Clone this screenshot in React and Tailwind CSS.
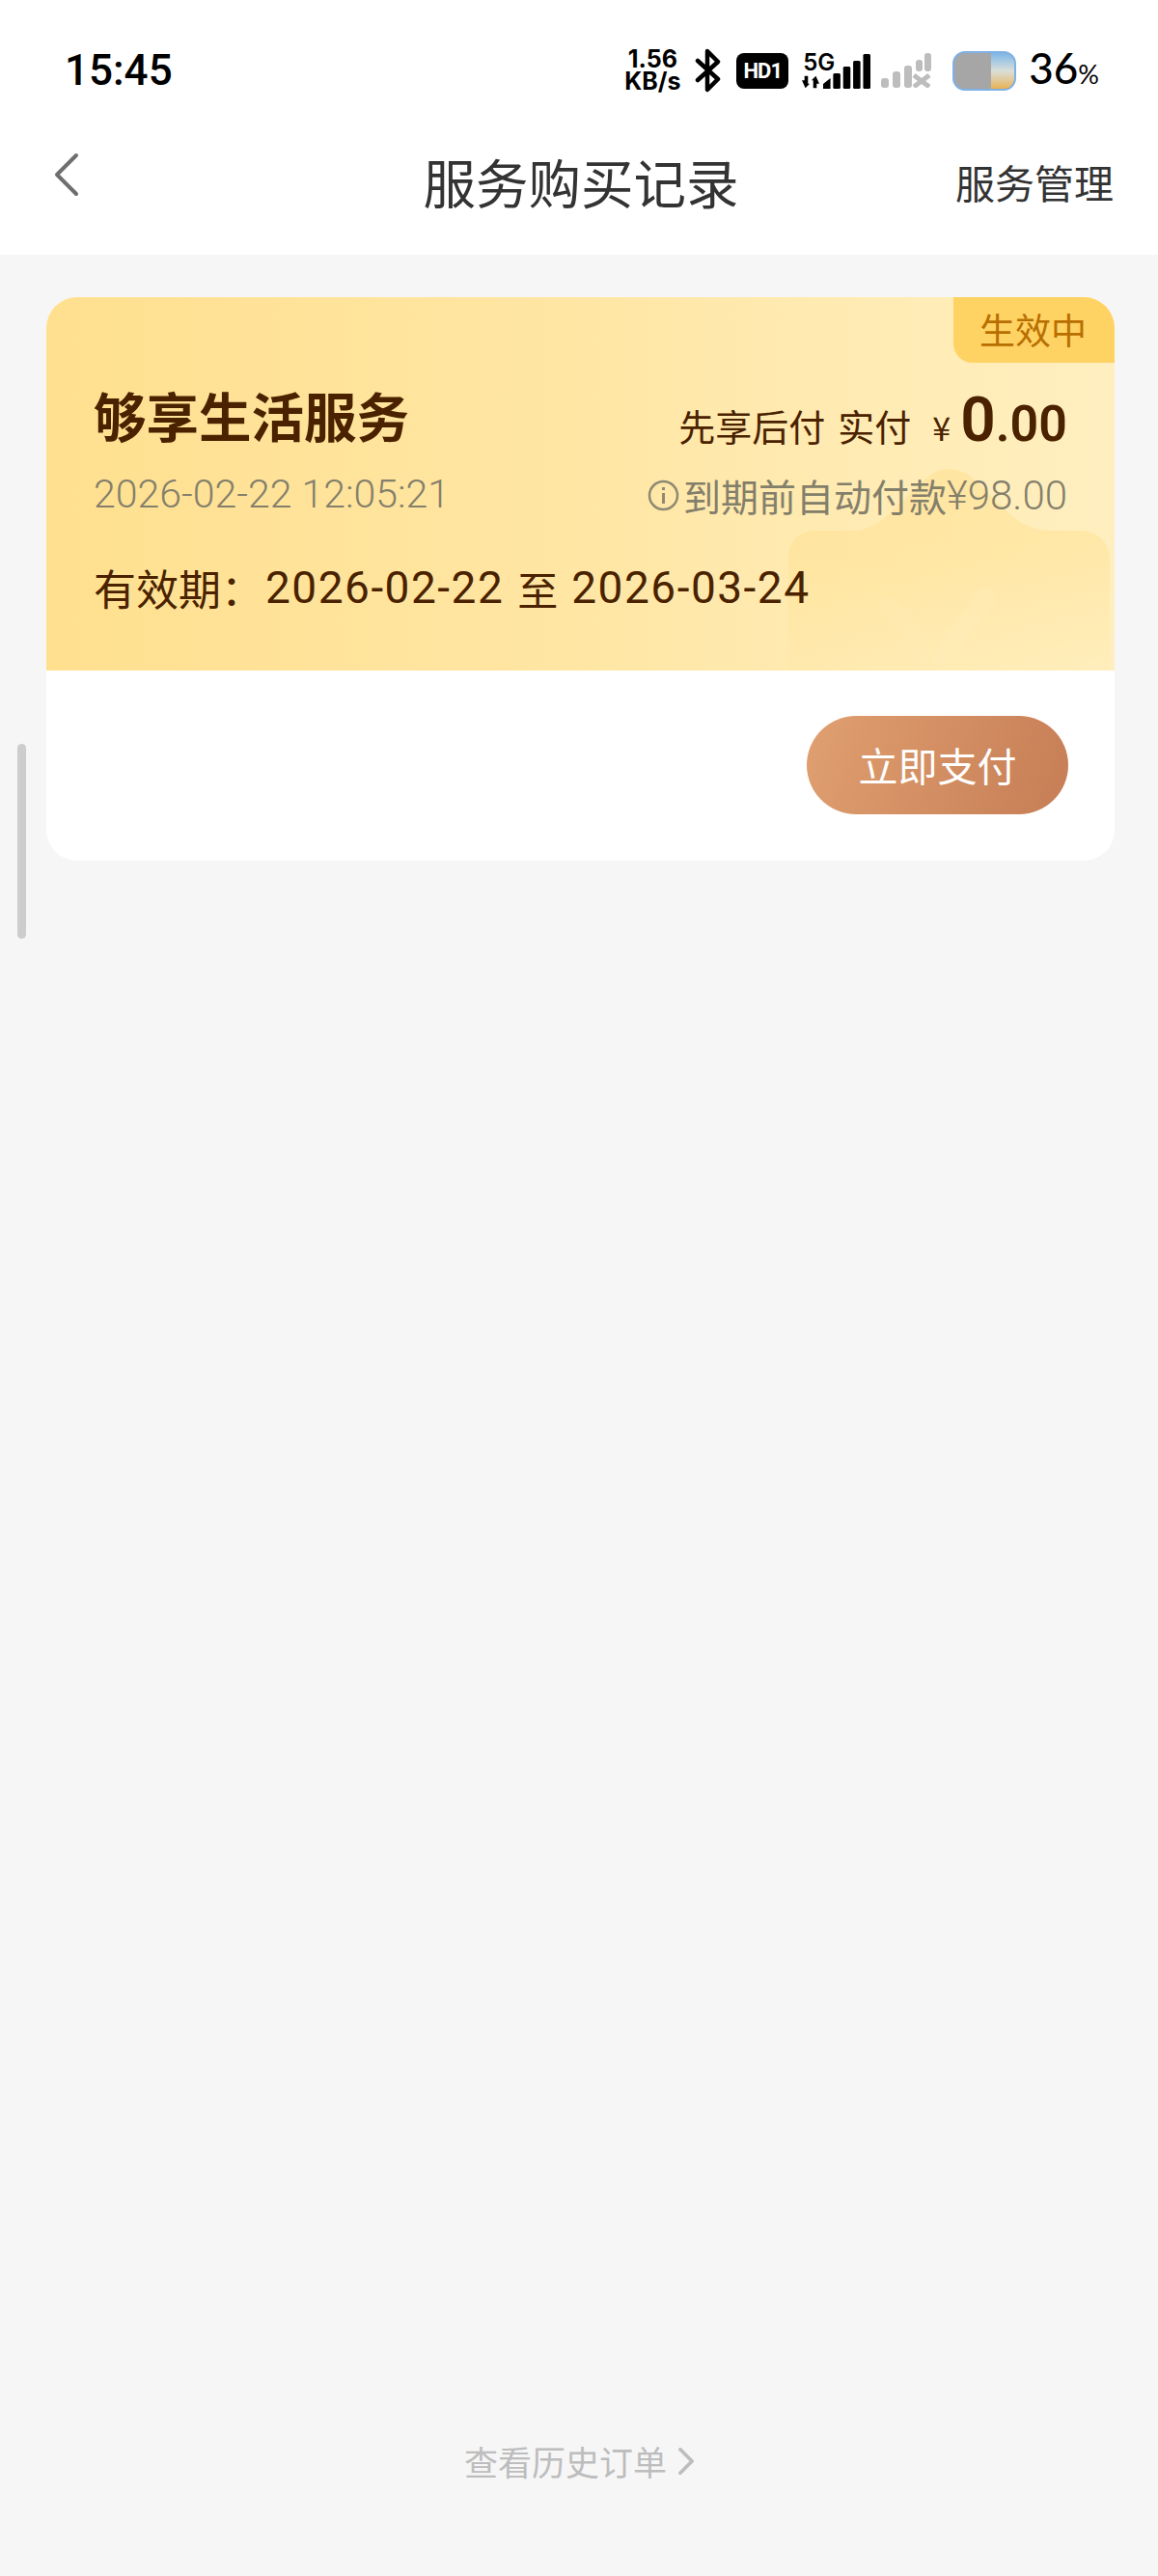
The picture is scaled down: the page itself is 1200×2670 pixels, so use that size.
import React from 'react';

const CJK = "font-['Noto_Sans_CJK_SC','Noto_Sans',sans-serif]";

// --- Status bar icons ---
const Bluetooth = () => (
    <svg width="30" height="46" viewBox="0 0 30 46" fill="none" stroke="#000" strokeWidth="4.5" strokeLinejoin="round" strokeLinecap="round">
        <path d="M4 13 L25 32 L14 43 V3 L25 14 L4 33" />
    </svg>
);

const Signal = ({ color, cross }) => (
    <svg width={cross ? 52 : 49} height="36" viewBox="0 0 52 36" preserveAspectRatio="none" fill={color}>
        {cross ? (
            <>
                <rect x="0" y="26" width="8" height="10" rx="3" />
                <rect x="12" y="19" width="8" height="17" rx="3" />
                <rect x="24" y="13" width="8" height="23" rx="3" />
                <rect x="36" y="7" width="7" height="12" rx="3" />
                <rect x="45" y="0" width="7" height="19" rx="3" />
                <path d="M34 23 L50 35 M50 23 L34 35" stroke={color} strokeWidth="5" fill="none" />
            </>
        ) : (
            <>
                <path d="M0 36 V31 L8 25 V36 Z" />
                <rect x="11" y="20" width="8" height="16" rx="1.5" />
                <rect x="22" y="13" width="8" height="23" rx="1.5" />
                <rect x="33" y="7" width="8" height="29" rx="1.5" />
                <rect x="44" y="0" width="8" height="36" rx="1.5" />
            </>
        )}
    </svg>
);

const Battery = () => (
    <div className="relative w-[66px] h-[41px] rounded-[13px] border-2 border-[#7fb0e6] bg-[#a6a6a6] overflow-hidden">
        <div className="absolute right-0 top-0 bottom-0 w-[24px] bg-gradient-to-b from-[#7db6e8] via-[#d9dfd8] to-[#e8b24f]" />
    </div>
);

// faint crown shape behind the card text
const Watermark = () => (
    <svg className="absolute right-[5px] bottom-0" width="333" height="210" viewBox="0 0 333 210" fill="none">
        <defs>
            <linearGradient id="crown" x1="0" y1="0" x2="0" y2="1">
                <stop offset="0" stopColor="#ffe08f" stopOpacity="0.55" />
                <stop offset="0.45" stopColor="#ffe08f" stopOpacity="0.45" />
                <stop offset="1" stopColor="#ffe08f" stopOpacity="0.08" />
            </linearGradient>
        </defs>
        <path d="M0 210 V90 Q2 68 26 65 H72 Q92 62 110 42 L146 8 Q166 -6 188 8 L232 50 Q250 65 272 65 H305 Q330 68 333 92 V210 Z" fill="url(#crown)" />
        <path d="M105 145 Q125 160 138 190" stroke="#ffedb8" strokeOpacity="0.25" strokeWidth="22" strokeLinecap="round" />
        <path d="M160 195 Q180 165 205 135" stroke="#ffedb8" strokeOpacity="0.4" strokeWidth="20" strokeLinecap="round" />
    </svg>
);

const Chevron = ({ className, color, width }) => (
    <svg className={className} viewBox="0 0 26 46" fill="none" stroke={color} strokeWidth={width} strokeLinecap="round" strokeLinejoin="round">
        <path d="M23 3 L3 23 L23 43" />
    </svg>
);

const InfoIcon = () => (
    <svg width="33" height="33" viewBox="0 0 33 33" fill="none" stroke="#8f8a72" strokeWidth="2.5">
        <circle cx="16.5" cy="16.5" r="14.5" />
        <path d="M16.5 14 V25" strokeWidth="3" />
        <path d="M16.5 8 V11" strokeWidth="3" />
    </svg>
);

export default function App() {
    return (
        <div className={`relative w-[1200px] h-[2670px] bg-[#f6f6f6] flex flex-col overflow-hidden ${CJK}`}>
            {/* Status bar + title */}
            <div className="bg-white h-[264px] shrink-0 flex flex-col">
                <div className="h-[146px] flex items-start justify-between pl-[67px] pr-[61px] pt-[48px]">
                    <span className="font-['Roboto',sans-serif] font-medium text-[44px] leading-[50px] text-black">15:45</span>
                    <div className="flex items-center h-[50px] font-['Inter',sans-serif] text-black">
                        <div className="flex flex-col items-center font-bold text-[25px] leading-[23px] w-[60px] mr-[13px]">
                            <span>1.56</span>
                            <span>KB/s</span>
                        </div>
                        <Bluetooth />
                        <div className="w-[54px] h-[37px] ml-[14px] rounded-[8px] bg-black text-white font-['Roboto',sans-serif] font-bold text-[22px] leading-[37px] text-center tracking-[-1px]">HD1</div>
                        <div className="flex items-end ml-[14px]">
                            <div className="flex flex-col items-center w-[34px] mr-[-12px]">
                                <span className="font-semibold text-[24px] leading-[22px] self-end">5G</span>
                                <svg width="18" height="14" viewBox="0 0 20 14" fill="#000" className="mt-[2px] self-start">
                                    <path d="M0 5 H3 V0 H7 V9 H9 L4 14 Z" />
                                    <path d="M20 9 H17 V14 H13 V5 H11 L16 0 Z" />
                                </svg>
                            </div>
                            <Signal color="#000" />
                        </div>
                        <div className="ml-[11px]">
                            <Signal color="#bdbdbd" cross />
                        </div>
                        <div className="ml-[22px]">
                            <Battery />
                        </div>
                        <div className="ml-[13px] flex items-baseline text-black font-['Lato',sans-serif]">
                            <span className="text-[44px] leading-[50px] font-medium">36</span>
                            <span className="text-[27px] leading-[50px]">%</span>
                        </div>
                    </div>
                </div>
                <div className="grid grid-cols-[1fr_auto_1fr] items-start pl-[50px] pr-[46px]">
                    <Chevron className="w-[26px] h-[46px] mt-[12px] ml-[6px]" color="#6e6e6e" width="4" />
                    <span className="text-[54.5px] leading-[84px] text-[#333333]">服务购买记录</span>
                    <span className="justify-self-end text-[41px] leading-[84px] text-[#333333]">服务管理</span>
                </div>
            </div>

            {/* Scroll indicator */}
            <div className="absolute left-[18px] top-[771px] w-[9px] h-[202px] rounded-full bg-[#cdcdcd]" />

            {/* Order card */}
            <div className="mx-[48px] mt-[44px] w-[1107px] h-[584px] rounded-[32px] bg-white overflow-hidden shrink-0 flex flex-col">
                <div className="relative h-[387px] bg-gradient-to-r from-[#ffe08f] via-[#ffe6a4] to-[#ffefc0] pt-[90px] pl-[49px] pr-[49px]">
                    <Watermark />
                    <div className="absolute right-0 top-0 w-[167px] h-[68px] rounded-bl-[20px] bg-[#ffd264] flex items-center pl-[27px] text-[37px] text-[#b96f00]">生效中</div>

                    <div className="relative flex items-center justify-between h-[68px]">
                        <span className="font-bold text-[54.5px] leading-[68px] text-[#4a2200] mb-[4px]">够享生活服务</span>
                        <div className="flex items-baseline text-[#4a2200] leading-[68px] mt-[14px]">
                            <span className="text-[38px]">先享后付</span>
                            <span className="text-[38px] ml-[13px]">实付</span>
                            <span className="text-[34px] ml-[22px]">¥</span>
                            <span className="font-['Roboto',sans-serif] font-semibold text-[64px] ml-[10px]">0</span>
                            <span className="font-['Roboto',sans-serif] font-semibold text-[52px]">.00</span>
                        </div>
                    </div>

                    <div className="relative flex items-center justify-between h-[60px] mt-[17px] text-[#837f6b]">
                        <span className="font-['Roboto',sans-serif] font-light text-[41px]">2026-02-22 12:05:21</span>
                        <div className="flex items-center">
                            <InfoIcon />
                            <span className="text-[39px] ml-[4px]">到期前自动付款</span>
                            <span className="font-['Roboto',sans-serif] font-light text-[42px]">¥98.00</span>
                        </div>
                    </div>

                    <div className="relative flex items-center h-[60px] mt-[36px] text-[44px] text-[#4a2200]">
                        <span>{'有效期\uFF1A'}</span>
                        <span className="ml-[2px] font-['Roboto',sans-serif] font-normal text-[46px] tracking-[1.5px]">2026-02-22</span>
                        <span className="mx-[14px] text-[42px]">至</span>
                        <span className="font-['Roboto',sans-serif] font-normal text-[46px] tracking-[1.5px]">2026-03-24</span>
                    </div>
                </div>
                <div className="flex-1 flex justify-end items-start pt-[47px] pr-[48px]">
                    <button className="w-[271px] h-[102px] rounded-full bg-[linear-gradient(110deg,#e0a070,#c67d55)] text-white text-[41px]">立即支付</button>
                </div>
            </div>

            {/* History link */}
            <div className="absolute left-0 right-0 bottom-[93px] flex items-center justify-center text-[35px] leading-[52px] text-[#bdbdbd]">
                <span>查看历史订单</span>
                <Chevron className="w-[16px] h-[28px] ml-[12px] rotate-180" color="#bdbdbd" width="6" />
            </div>
        </div>
    );
}
